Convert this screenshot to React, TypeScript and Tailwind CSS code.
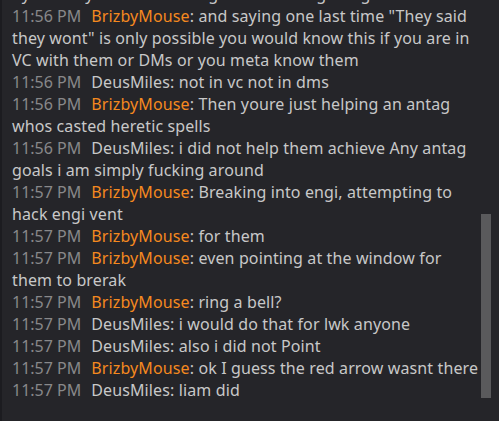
import React from "react";

type Msg = { time: string; name: string; text: string; orange: boolean };

const msgs: Msg[] = [
  { time: "11:56 PM", name: "BrizbyMouse", orange: true, text: 'and saying one last time "They said they wont" is only possible you would know this if you are in VC with them or DMs or you meta know them' },
  { time: "11:56 PM", name: "DeusMiles", orange: false, text: "not in vc not in dms" },
  { time: "11:56 PM", name: "BrizbyMouse", orange: true, text: "Then youre just helping an antag whos casted heretic spells" },
  { time: "11:56 PM", name: "DeusMiles", orange: false, text: "i did not help them achieve Any antag goals i am simply fucking around" },
  { time: "11:57 PM", name: "BrizbyMouse", orange: true, text: "Breaking into engi, attempting to hack engi vent" },
  { time: "11:57 PM", name: "BrizbyMouse", orange: true, text: "for them" },
  { time: "11:57 PM", name: "BrizbyMouse", orange: true, text: "even pointing at the window for them to brerak" },
  { time: "11:57 PM", name: "BrizbyMouse", orange: true, text: "ring a bell?" },
  { time: "11:57 PM", name: "DeusMiles", orange: false, text: "i would do that for lwk anyone" },
  { time: "11:57 PM", name: "DeusMiles", orange: false, text: "also i did not Point" },
  { time: "11:57 PM", name: "BrizbyMouse", orange: true, text: "ok I guess the red arrow wasnt there" },
  { time: "11:57 PM", name: "DeusMiles", orange: false, text: "liam did" },
];

export default function App() {
  return (
    <div
      className="relative flex h-[421px] w-[499px] overflow-hidden bg-[#252529]"
      style={{ fontFamily: '"Noto Sans", "Open Sans", sans-serif' }}
    >
      <div className="w-[2px] shrink-0 bg-[#1c1c20]" />
      <div className="flex-1 pl-[10px] pr-[19px] -mt-[17px] text-[16px] leading-[22px] text-[#c8c8c8] tracking-[0.12px]">
        <div>by the way i was not sitting around doing things</div>
        {msgs.map((m, i) => (
          <div key={i}>
            <span className="mr-[10px] text-[#88888a] tracking-normal">{m.time}</span>
            <span className={m.orange ? "text-[#f5891f]" : "text-[#c8c8c8]"}>{m.name}</span>
            <span>: {m.text}</span>
          </div>
        ))}
      </div>
      <div className="absolute left-[481px] top-[214px] h-[184px] w-[10px] bg-[#5a5a5c]" />
    </div>
  );
}
